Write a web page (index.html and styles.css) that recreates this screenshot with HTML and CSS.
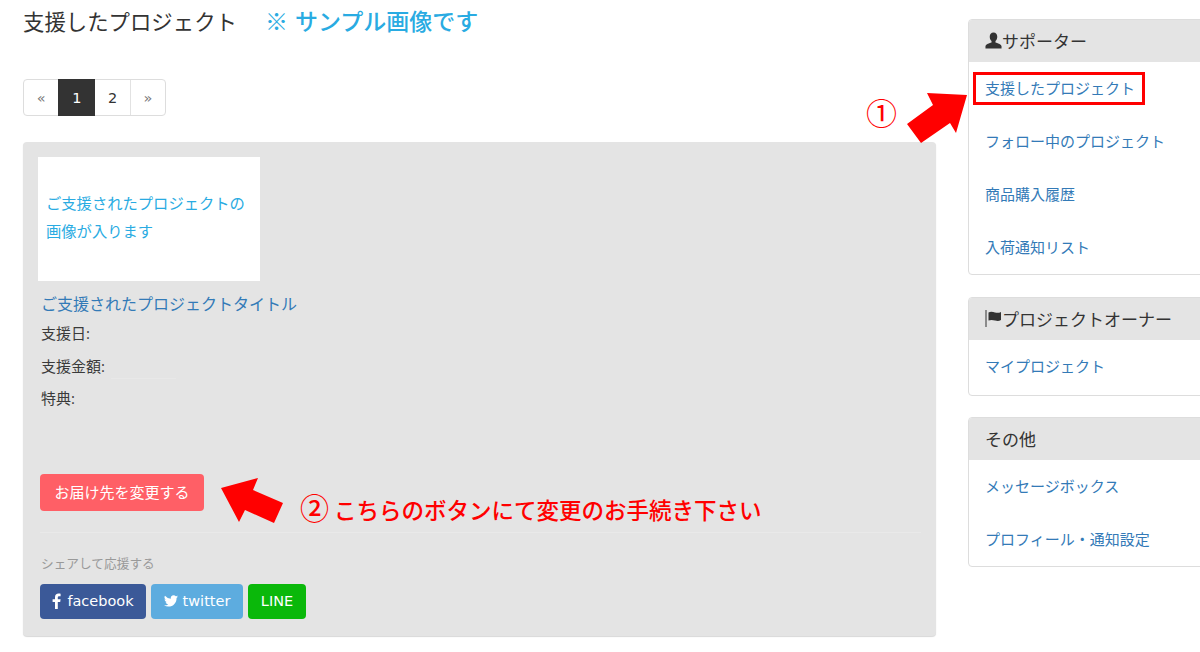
FILE: index.html
```html
<!DOCTYPE html>
<html lang="ja">
<head>
  <meta charset="UTF-8">
  <title>支援したプロジェクト</title>
  <link rel="stylesheet" href="styles.css">
</head>
<body>

  <div class="page">
    <div class="main">
      <h2 class="title">支援したプロジェクト<span class="sample">※ サンプル画像です</span></h2>

      <ul class="pager">
        <li class="arrow">«</li>
        <li class="active">1</li>
        <li>2</li>
        <li class="arrow">»</li>
      </ul>

      <div class="card">
        <div class="thumb">ご支援されたプロジェクトの<br>画像が入ります</div>
        <div class="body">
          <a class="card-title">ご支援されたプロジェクトタイトル</a>
          <p class="row">支援日:</p>
          <p class="row">支援金額:<span class="faint"></span></p>
          <p class="row">特典:</p>
          <a class="btn-change">お届け先を変更する</a>
          <hr class="line">
          <p class="share-label">シェアして応援する</p>
          <div class="share">
            <a class="sns fb">
              <svg class="sns-icon" width="10" height="16" viewBox="0 0 10 16"><path d="M3 16V9H.6V6.2H3V4.2C3 1.8 4.4.6 6.5.6c1 0 1.8.1 2.1.1v2.5H7.2c-1.1 0-1.4.6-1.4 1.4v1.6h2.8L8.2 9H5.800V16z" fill="#fff"/></svg>facebook
            </a>
            <a class="sns tw">
              <svg class="sns-icon" width="14" height="12" viewBox="0 0 24 20"><path d="M24 2.400a9.800 9.800 0 0 1-2.800.8A5 5 0 0 0 23.300.500a9.800 9.800 0 0 1-3.100 1.200 4.900 4.900 0 0 0-8.400 4.500A14 14 0 0 1 1.700 1a4.900 4.900 0 0 0 1.500 6.600 4.900 4.900 0 0 1-2.200-.6c0 2.400 1.700 4.400 3.900 4.900a4.900 4.900 0 0 1-2.200.1 4.900 4.900 0 0 0 4.600 3.400A9.900 9.900 0 0 1 0 17.400 14 14 0 0 0 7.500 19.600c9.100 0 14.300-7.700 14-14.600A10 10 0 0 0 24 2.400z" fill="#fff"/></svg>twitter
            </a>
            <a class="sns line-btn">LINE</a>
          </div>
        </div>
      </div>
    </div>

    <div class="side">
      <div class="panel">
        <div class="panel-head">
          <svg class="head-icon" width="17" height="17" viewBox="0 0 18 17"><path d="M9 0c2.500 0 4 1.900 4 4.400 0 1.900-.8 3.500-1.900 4.500v1.700c2 .8 5.900 1.700 6.400 3.800V17H.5v-2.600c.5-2.100 4.400-3 6.400-3.800V8.900C5.800 7.900 5 6.300 5 4.400 5 1.900 6.500 0 9 0z" fill="#333"/></svg>サポーター
        </div>
        <a class="item">支援したプロジェクト</a>
        <a class="item">フォロー中のプロジェクト</a>
        <a class="item">商品購入履歴</a>
        <a class="item">入荷通知リスト</a>
      </div>

      <div class="panel owner">
        <div class="panel-head">
          <svg class="head-icon" width="17" height="17" viewBox="0 0 17 17"><path d="M.5 0h1v17h-1z M3.500 2.500C6 1 8 2 10 2.500c2 .5 4 .5 6-.5v8c-2 1.200-4 1-6 .5S6 9.500 3.500 10.500z" fill="#333"/></svg>プロジェクトオーナー
        </div>
        <a class="item">マイプロジェクト</a>
      </div>

      <div class="panel">
        <div class="panel-head">その他</div>
        <a class="item">メッセージボックス</a>
        <a class="item">プロフィール・通知設定</a>
      </div>
    </div>
  </div>

  <!-- 赤い注釈 -->
  <div class="mark-box"></div>
  <span class="mark-num one">①</span>
  <span class="mark-num two">②</span>
  <span class="mark-text">こちらのボタンにて変更のお手続き下さい</span>
  <svg class="mark-arrows" width="1200" height="652" viewBox="0 0 1200 652">
    <polygon points="927,93 967,95 956,133 950,123 921,143 907,124 933,105" fill="#f00"/>
    <polygon points="221,488 258,478 253,490 283,503 274,523 245,510 239,522" fill="#f00"/>
  </svg>

</body>
</html>
```

FILE: styles.css
```css
html, body {
  height: 652px;
  overflow: hidden;
}
body {
  margin: 0;
  background: #fff;
  color: #333;
  font-family: "Open Sans", "Noto Sans CJK JP", sans-serif;
  font-size: 15px;
}
a {
  color: #337ab7;
}
.page {
  display: flex;
  gap: 32px;
  padding-left: 23px;
}
.main {
  flex: 0 0 913px;
}
.side {
  flex: 0 0 260px;
  padding-top: 19px;
}

/* title */
.title {
  margin: 0;
  height: 42px;
  line-height: 42px;
  font-size: 21.400px;
  font-weight: 400;
}
.sample {
  margin-left: 28px;
  color: #29abe2;
  font-size: 23px;
  font-weight: 500;
  word-spacing: 1px;
}

/* pager */
.pager {
  display: flex;
  width: 143px;
  height: 37px;
  margin: 37px 0 26px;
  padding: 0;
  list-style: none;
  box-sizing: border-box;
  border: 1px solid #ddd;
  border-radius: 4px;
  font-family: "DejaVu Sans", sans-serif;
}
.pager li {
  flex: 1;
  display: flex;
  align-items: center;
  justify-content: center;
  font-size: 14.500px;
  border-left: 1px solid #e2e2e2;
}
.pager li:first-child {
  border-left: none;
}
.pager .arrow {
  color: #777;
}
.pager .active {
  flex: 0 0 37px;
  margin: -1px 0;
  background: #333;
  color: #fff;
  border-left: none;
}
.pager .active + li {
  border-left: none;
}

/* card */
.card {
  height: 494px;
  padding: 15px 15px 0;
  box-sizing: border-box;
  background: #e4e4e4;
  border-radius: 4px;
  box-shadow: 0 1px 1px #d8d8d8;
}
.thumb {
  width: 222px;
  height: 124px;
  padding: 0 0 5px 8px;
  box-sizing: border-box;
  background: #fff;
  color: #29abe2;
  font-size: 15.300px;
  line-height: 28px;
  display: flex;
  flex-direction: column;
  justify-content: center;
}
.body {
  padding: 11px 0 0 2px;
}
.card-title {
  display: block;
  margin: 0 0 1px 1px;
  font-size: 16px;
  line-height: 24px;
}
.row {
  margin: 0 0 0 1px;
  height: 32.500px;
  line-height: 32.500px;
  font-size: 15px;
  color: #3a3a3a;
}
.faint {
  display: inline-block;
  width: 65px;
  height: 1px;
  margin-left: 6px;
  background: #e8e8e8;
  vertical-align: -7px;
}
.btn-change {
  display: block;
  width: 164px;
  height: 37px;
  margin: 59px 0 0;
  background: #ff5f66;
  color: #fff;
  border-radius: 4px;
  font-size: 15px;
  line-height: 37px;
  text-align: center;
}
.line {
  margin: 21px 0 0;
  border: 0;
  height: 1px;
  background: #e9e9e9;
}
.share-label {
  margin: 20px 0 0 1px;
  color: #999;
  font-size: 12.700px;
  line-height: 20px;
}
.share {
  display: flex;
  gap: 5px;
  margin: 11px 0 0;
  font-family: "DejaVu Sans", sans-serif;
}
.sns {
  display: flex;
  align-items: center;
  justify-content: center;
  height: 35px;
  border-radius: 4px;
  color: #fff;
  font-size: 14.500px;
}
.sns-icon {
  margin-right: 5px;
}
.fb {
  width: 106px;
  background: #3b5998;
}
.tw {
  width: 92px;
  background: #5dacdf;
}
.line-btn {
  width: 58px;
  background: #0ab80a;
}

/* sidebar */
.panel {
  margin-bottom: 22px;
  background: #fff;
  border: 1px solid #ddd;
  border-radius: 4px;
  overflow: hidden;
}
.panel.owner {
  margin-bottom: 21px;
  padding-bottom: 2px;
}
.panel-head {
  display: flex;
  align-items: center;
  height: 40px;
  padding: 0 0 2px 16px;
  background: #e4e4e4;
  font-size: 17px;
}
.head-icon {
  flex: none;
}
.item {
  display: block;
  height: 53px;
  padding-left: 16px;
  font-size: 15px;
  line-height: 53px;
}

/* annotations over the page */
.mark-box {
  position: absolute;
  left: 973px;
  top: 72px;
  width: 172px;
  height: 33px;
  box-sizing: border-box;
  border: 3px solid #f00;
}
.mark-num {
  position: absolute;
  color: #f00;
  line-height: 1;
}
.mark-num.one {
  left: 866px;
  top: 98px;
  font-size: 31px;
}
.mark-num.two {
  left: 300px;
  top: 494px;
  font-size: 29px;
  font-weight: 500;
}
.mark-text {
  position: absolute;
  left: 334px;
  top: 499px;
  color: #f00;
  font-size: 22.500px;
  font-weight: 500;
  line-height: 24px;
  white-space: nowrap;
}
.mark-arrows {
  position: absolute;
  left: 0;
  top: 0;
  pointer-events: none;
}
```
